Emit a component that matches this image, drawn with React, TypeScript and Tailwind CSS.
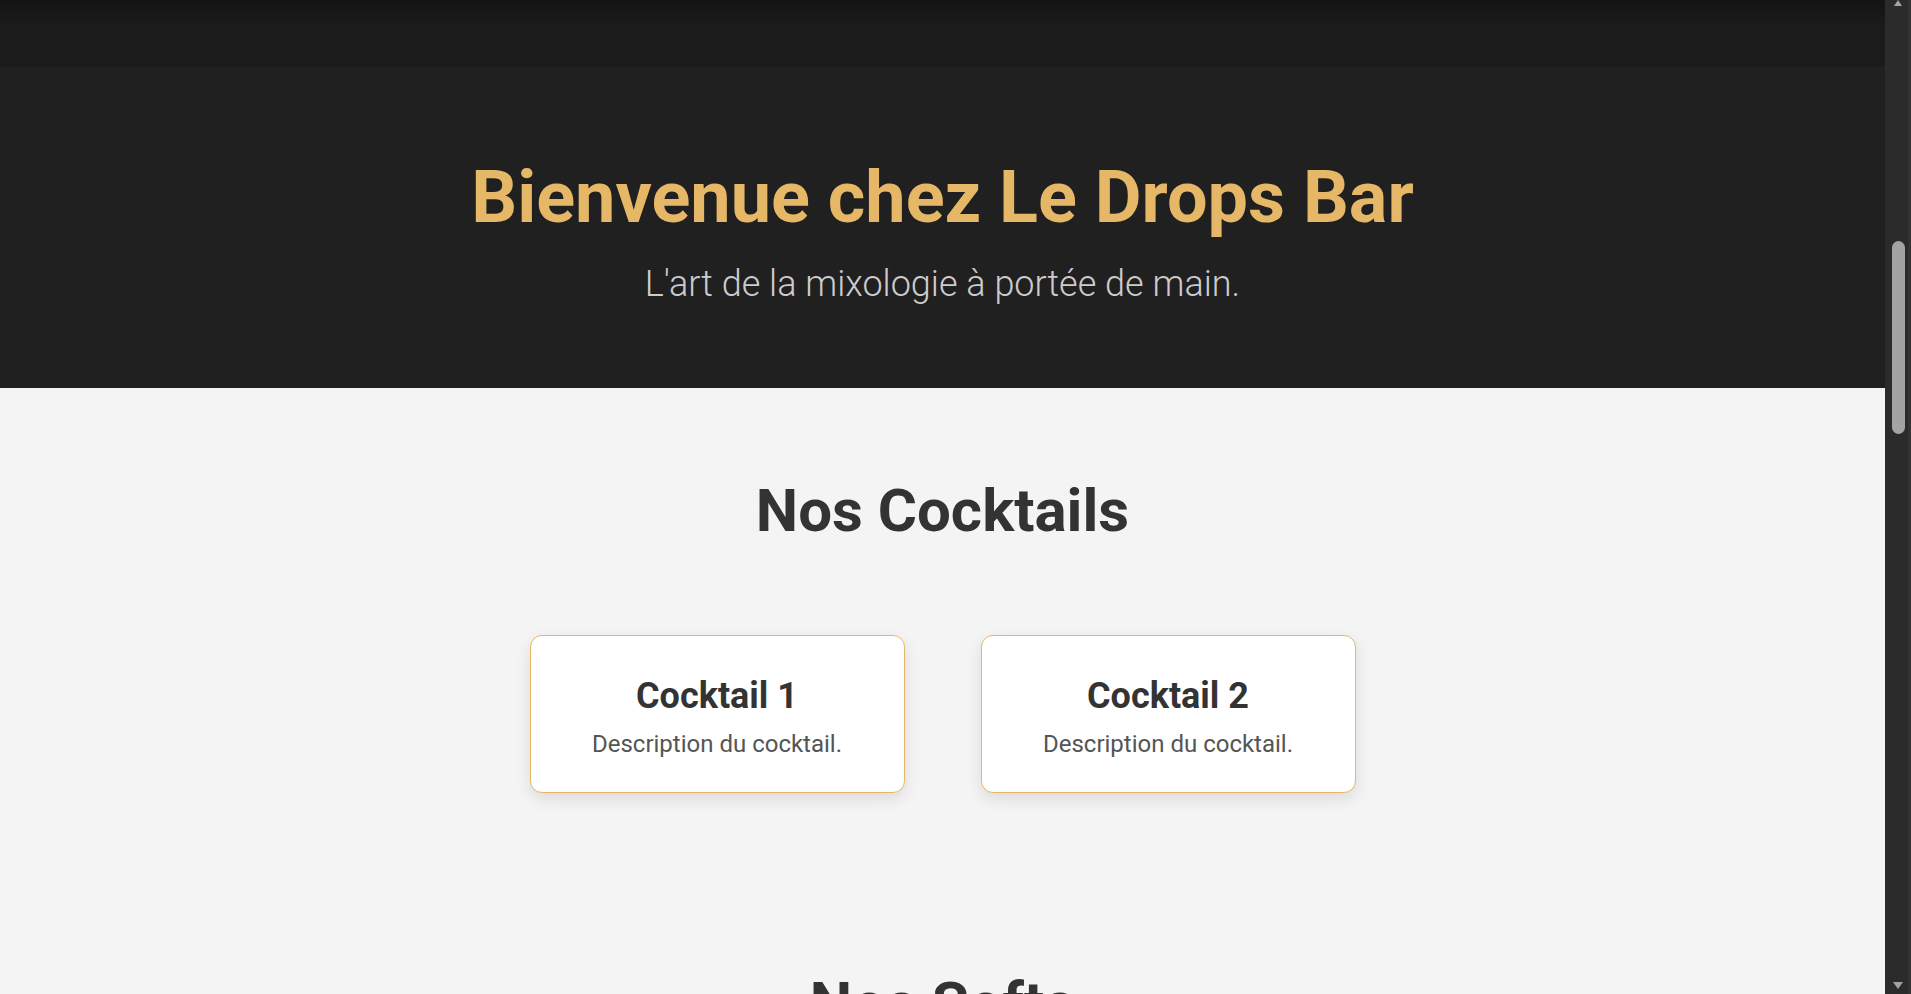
import React from "react";

function Card({ title }: { title: string }) {
  return (
    <div className="w-[375px] h-[158px] bg-white border-[1.5px] border-[#e5b767] rounded-[12px] shadow-[0_6px_15px_rgba(0,0,0,0.1)] flex flex-col items-center pt-[42px]">
      <h3 className="text-[36px] leading-none font-bold text-[#333333]">{title}</h3>
      <p className="mt-[18px] text-[24px] leading-none text-[#555555]">Description du cocktail.</p>
    </div>
  );
}

function Scrollbar() {
  return (
    <div className="w-[26px] h-full bg-[#2b2b2b] flex flex-col items-center border-r-[3px] border-[#333333]">
      <svg width="14" height="6" viewBox="0 0 14 6" className="mt-0 ml-[3px]">
        <path d="M3 6 L7 0 L11 6 Z" fill="#a3a3a3" />
      </svg>
      <div className="mt-[235px] ml-[3px] w-[13px] h-[193px] rounded-full bg-[#a3a3a3]" />
      <div className="flex-1" />
      <svg width="14" height="8" viewBox="0 0 14 8" className="mb-[4px] ml-[3px]">
        <path d="M2 0 L12 0 L7 7 Z" fill="#a3a3a3" />
      </svg>
    </div>
  );
}

export default function App() {
  return (
    <div className="flex w-screen h-screen overflow-hidden bg-[#f4f4f4] font-['Roboto',sans-serif]">
      <div className="flex-1 flex flex-col min-w-0">
        <header className="h-[66px] shrink-0 bg-linear-to-b from-[#141414] from-0% to-[#1b1b1b] to-40%" />
        <section className="h-[322px] shrink-0 bg-[#202020] flex flex-col items-center pt-[96px]">
          <h1 className="text-[72px] leading-none font-bold text-[#e5b767]">Bienvenue chez Le Drops Bar</h1>
          <p className="mt-[32px] text-[36px] leading-none font-light text-[#cccccc]">L'art de la mixologie à portée de main.</p>
        </section>
        <section className="flex flex-col items-center pt-[93px] pb-[93px]">
          <h2 className="text-[60px] leading-none font-bold text-[#333333]">Nos Cocktails</h2>
          <div className="mt-[94px] flex gap-[76px]">
            <Card title="Cocktail 1" />
            <Card title="Cocktail 2" />
          </div>
        </section>
        <section className="flex flex-col items-center pt-[88px]">
          <h2 className="text-[60px] leading-none font-bold text-[#333333]">Nos Softs</h2>
        </section>
      </div>
      <Scrollbar />
    </div>
  );
}
